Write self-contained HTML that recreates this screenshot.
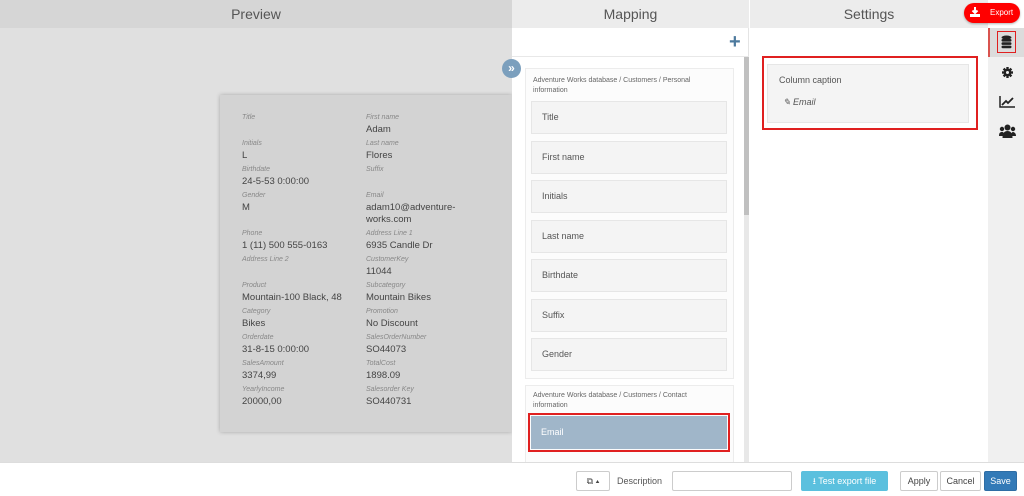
<!DOCTYPE html>
<html><head><meta charset="utf-8"><style>
*{box-sizing:border-box;margin:0;padding:0}
body{width:1024px;height:496px;overflow:hidden;font-family:"Liberation Sans",sans-serif;background:#fff;position:relative;color:#555}
.abs{position:absolute}
.hdr{top:0;height:28px;font-size:14px;color:#555;text-align:center;line-height:28px}
.lbl{font-size:7px;font-style:italic;color:#888}
.val{font-size:9.5px;color:#444}
.item{position:absolute;left:531px;width:196px;height:33px;background:#f4f4f4;border:1px solid #e6e6e6;font-size:9px;color:#555;padding-left:10px;line-height:31px}
.btn{position:absolute;top:471px;height:20px;border:1px solid #ccc;background:#fff;font-size:9px;color:#444;text-align:center;line-height:18px;border-radius:2px}
</style></head><body>
<div class="abs" style="left:0;top:0;width:512px;height:462px;background:#e0e0e0"></div>
<div class="abs hdr" style="left:0;width:512px;background:#d6d6d6">Preview</div>
<div class="abs" style="left:220px;top:95px;width:292px;height:337px;background:#d3d3d3;box-shadow:0 0 4px rgba(0,0,0,.25)"></div>
<div class="abs" style="left:242px;top:112px;line-height:12px">
<div class="lbl">Title</div><div class="val">&nbsp;</div>
<div class="lbl" style="margin-top:2px">Initials</div><div class="val">L</div>
<div class="lbl" style="margin-top:2px">Birthdate</div><div class="val">24-5-53 0:00:00</div>
<div class="lbl" style="margin-top:2px">Gender</div><div class="val">M</div>
<div class="val">&nbsp;</div>
<div class="lbl" style="margin-top:2px">Phone</div><div class="val">1 (11) 500 555-0163</div>
<div class="lbl" style="margin-top:2px">Address Line 2</div><div class="val">&nbsp;</div>
<div class="lbl" style="margin-top:2px">Product</div><div class="val">Mountain-100 Black, 48</div>
<div class="lbl" style="margin-top:2px">Category</div><div class="val">Bikes</div>
<div class="lbl" style="margin-top:2px">Orderdate</div><div class="val">31-8-15 0:00:00</div>
<div class="lbl" style="margin-top:2px">SalesAmount</div><div class="val">3374,99</div>
<div class="lbl" style="margin-top:2px">YearlyIncome</div><div class="val">20000,00</div>
</div>
<div class="abs" style="left:366px;top:112px;line-height:12px">
<div class="lbl">First name</div><div class="val">Adam</div>
<div class="lbl" style="margin-top:2px">Last name</div><div class="val">Flores</div>
<div class="lbl" style="margin-top:2px">Suffix</div><div class="val">&nbsp;</div>
<div class="lbl" style="margin-top:2px">Email</div><div class="val">adam10@adventure-<br>works.com</div>
<div class="lbl" style="margin-top:2px">Address Line 1</div><div class="val">6935 Candle Dr</div>
<div class="lbl" style="margin-top:2px">CustomerKey</div><div class="val">11044</div>
<div class="lbl" style="margin-top:2px">Subcategory</div><div class="val">Mountain Bikes</div>
<div class="lbl" style="margin-top:2px">Promotion</div><div class="val">No Discount</div>
<div class="lbl" style="margin-top:2px">SalesOrderNumber</div><div class="val">SO44073</div>
<div class="lbl" style="margin-top:2px">TotalCost</div><div class="val">1898.09</div>
<div class="lbl" style="margin-top:2px">Salesorder Key</div><div class="val">SO440731</div>
</div>
<div class="abs" style="left:512px;top:0;width:237px;height:462px;background:#fff;border-right:1px solid #e4e4e4"></div>
<div class="abs hdr" style="left:512px;width:237px;background:#ececec">Mapping</div>
<div class="abs" style="left:512px;top:56px;width:237px;height:1px;background:#e8e8e8"></div>
<div class="abs" style="left:729px;top:33px;color:#4d7a9e;font-size:20px;font-weight:bold;line-height:18px">+</div>
<div class="abs" style="left:502px;top:59px;width:19px;height:19px;border-radius:50%;background:#7b9fbd;color:#fff;font-size:12px;text-align:center;line-height:18px;font-weight:bold">»</div>
<div class="abs" style="left:744px;top:57px;width:5px;height:405px;background:#e8e8e8"></div>
<div class="abs" style="left:744px;top:57px;width:5px;height:158px;background:#c0c0c0"></div>
<div class="abs" style="left:525px;top:68px;width:209px;height:311px;border:1px solid #ececec;background:#fcfcfc"></div>
<div class="abs" style="left:533px;top:76px;font-size:7px;color:#666;line-height:10px">Adventure Works database / Customers / Personal<br>information</div>
<div class="item" style="top:101px">Title</div>
<div class="item" style="top:141px">First name</div>
<div class="item" style="top:180px">Initials</div>
<div class="item" style="top:220px">Last name</div>
<div class="item" style="top:259px">Birthdate</div>
<div class="item" style="top:299px">Suffix</div>
<div class="item" style="top:338px">Gender</div>
<div class="abs" style="left:525px;top:385px;width:209px;height:80px;border:1px solid #ececec;background:#fcfcfc"></div>
<div class="abs" style="left:533px;top:391px;font-size:7px;color:#666;line-height:10px">Adventure Works database / Customers / Contact<br>information</div>
<div class="abs" style="left:528px;top:413px;width:202px;height:39px;border:2px solid #e02020;padding:1px"><div style="background:#a0b6c9;height:100%;color:#fff;font-size:9px;padding-left:10px;line-height:33px">Email</div></div>
<div class="abs hdr" style="left:750px;width:238px;background:#ececec">Settings</div>
<div class="abs" style="left:762px;top:56px;width:216px;height:74px;border:2px solid #e02020"></div>
<div class="abs" style="left:767px;top:64px;width:202px;height:59px;background:#f4f4f4;border:1px solid #e6e6e6"></div>
<div class="abs" style="left:779px;top:75px;font-size:9px;color:#555">Column caption</div>
<div class="abs" style="left:783px;top:97px;font-size:9px;color:#555;font-style:italic">✎ Email</div>
<div class="abs" style="left:988px;top:28px;width:36px;height:434px;background:#f0f0f0"></div>
<div class="abs" style="left:988px;top:28px;width:36px;height:29px;background:#dcdcdc;border-left:2px solid #d9534f"></div>
<div class="abs" style="left:997px;top:31px;width:19px;height:22px;border:1.5px solid #e02020"></div>
<svg class="abs" style="left:1001px;top:35px" width="11" height="14" viewBox="0 0 11 14"><g fill="#222"><ellipse cx="5.5" cy="2.5" rx="5" ry="2"/><rect x=".5" y="4" width="10" height="2.6" rx="1.3"/><rect x=".5" y="7.3" width="10" height="2.6" rx="1.3"/><rect x=".5" y="10.6" width="10" height="2.6" rx="1.3"/></g></svg>
<svg class="abs" style="left:1002px;top:67px" width="11" height="11" viewBox="0 0 11 11"><g fill="#222"><circle cx="5.5" cy="5.5" r="3.8"/><rect x="4.3" y="0" width="2.4" height="11"/><rect x="0" y="4.3" width="11" height="2.4"/><rect x="4.3" y="0" width="2.4" height="11" transform="rotate(45 5.5 5.5)"/><rect x="4.3" y="0" width="2.4" height="11" transform="rotate(-45 5.5 5.5)"/></g><circle cx="5.5" cy="5.5" r="1.5" fill="#f0f0f0"/></svg>
<svg class="abs" style="left:999px;top:96px" width="16" height="12" viewBox="0 0 16 12"><path d="M1 0V11H16" stroke="#222" stroke-width="1.5" fill="none"/><path d="M3 9L7 5L9 7L14 2" stroke="#222" stroke-width="1.8" fill="none"/></svg>
<svg class="abs" style="left:999px;top:124px" width="17" height="14" viewBox="0 0 17 14"><g fill="#222"><circle cx="8.5" cy="3.5" r="3"/><circle cx="3" cy="5" r="2.2"/><circle cx="14" cy="5" r="2.2"/><path d="M3.5 14C3.5 9 5.5 7 8.5 7S13.5 9 13.5 14Z"/><path d="M0 12C0 9 1 8 3 8S5 9 5 12Z"/><path d="M12 12C12 9 13 8 14 8S17 9 17 12Z"/></g></svg>
<div class="abs" style="left:964px;top:3px;width:56px;height:20px;background:#f00;border-radius:10px;color:#fff;font-size:8px;line-height:20px;padding-left:26px;box-shadow:0 1px 2px rgba(0,0,0,.3)">Export</div>
<svg class="abs" style="left:970px;top:7px" width="10" height="10" viewBox="0 0 10 10"><path d="M5 0V6M2.5 3.5L5 6L7.5 3.5" stroke="#fff" stroke-width="2" fill="none"/><rect x="0" y="7" width="10" height="3" fill="#fff"/></svg>
<div class="abs" style="left:0;top:462px;width:1024px;height:34px;background:#fff;border-top:1px solid #ddd"></div>
<div class="btn" style="left:576px;width:34px">⧉ ▴</div>
<div class="abs" style="left:617px;top:476px;font-size:9px;color:#555">Description</div>
<div class="abs" style="left:672px;top:471px;width:120px;height:20px;border:1px solid #ccc;border-radius:2px"></div>
<div class="btn" style="left:801px;width:87px;background:#5bc0de;border-color:#5bc0de;color:#fff">⭳ Test export file</div>
<div class="btn" style="left:900px;width:38px">Apply</div>
<div class="btn" style="left:940px;width:41px">Cancel</div>
<div class="btn" style="left:984px;width:33px;background:#337ab7;border-color:#2e6da4;color:#fff">Save</div>
</body></html>
